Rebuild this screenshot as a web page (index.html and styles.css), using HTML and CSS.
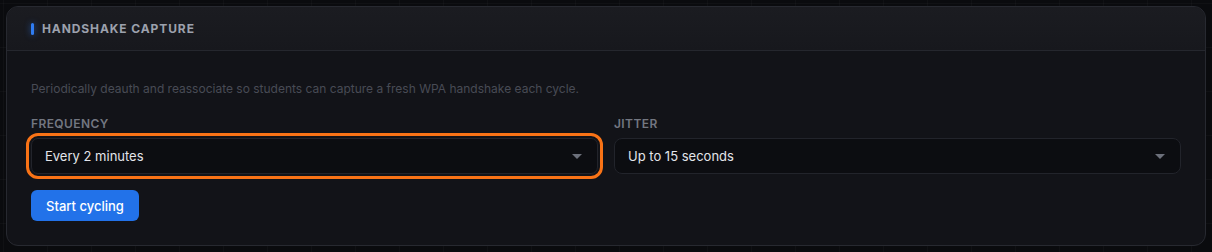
FILE: index.html
```html
<!DOCTYPE html>
<html lang="en">
<head>
<meta charset="utf-8">
<title>Handshake Capture</title>
<link rel="stylesheet" href="styles.css">
</head>
<body>
  <section class="card">
    <header class="card-head">
      <span class="accent"></span>
      <h2 class="title">Handshake Capture</h2>
    </header>
    <div class="card-body">
      <p class="desc">Periodically deauth and reassociate so students can capture a fresh WPA handshake each cycle.</p>
      <div class="fields">
        <div class="field">
          <label class="label">Frequency</label>
          <div class="select focused">
            <span class="value">Every 2 minutes</span>
            <span class="caret"></span>
          </div>
        </div>
        <div class="field">
          <label class="label">Jitter</label>
          <div class="select">
            <span class="value">Up to 15 seconds</span>
            <span class="caret"></span>
          </div>
        </div>
      </div>
      <div class="actions">
        <button class="btn">Start cycling</button>
      </div>
    </div>
  </section>
</body>
</html>
```

FILE: styles.css
```css
* { box-sizing: border-box; }
html, body { height: 100%; }
body {
  margin: 0;
  padding: 6px;
  background-color: #0a0b0e;
  background-image:
    linear-gradient(rgba(255,255,255,0.025) 1px, transparent 1px),
    linear-gradient(90deg, rgba(255,255,255,0.025) 1px, transparent 1px);
  background-size: 44px 44px;
  background-position: 3px 3px;
  font-family: Inter, "Noto Sans", "Liberation Sans", sans-serif;
}
.card {
  width: 1200px;
  border: 1px solid #272930;
  border-radius: 12px;
  background: #121318;
  overflow: hidden;
}
.card-head {
  height: 44px;
  display: flex;
  align-items: center;
  gap: 8px;
  padding: 0 24px;
  background: linear-gradient(#1b1c21, #17181d);
  border-bottom: 1px solid #25272e;
}
.accent {
  width: 3px;
  height: 12px;
  border-radius: 2px;
  background: #2f7cf2;
  box-shadow: 0 0 6px rgba(47,124,242,0.6);
}
.title {
  margin: 0;
  font-size: 12px;
  font-weight: 700;
  letter-spacing: 0.9px;
  text-transform: uppercase;
  color: #9ca1ad;
}
.card-body {
  padding: 30px 24px 24px;
}
.desc {
  margin: 0 0 20px;
  font-size: 12px;
  line-height: 16px;
  color: #484b55;
}
.fields {
  display: grid;
  grid-template-columns: 1fr 1fr;
  gap: 16px;
}
.field { display: flex; flex-direction: column; }
.label {
  font-size: 12px;
  line-height: 14px;
  font-weight: 600;
  letter-spacing: 0.4px;
  text-transform: uppercase;
  color: #737781;
  margin-bottom: 7px;
}
.select {
  height: 36px;
  display: flex;
  align-items: center;
  justify-content: space-between;
  padding: 0 15px 0 13px;
  background: #0c0d11;
  border: 1px solid #22242b;
  border-radius: 8px;
}
.select.focused {
  outline: 3px solid #f97316;
  outline-offset: 2px;
  border-radius: 7px;
}
.value {
  font-size: 13px;
  color: #e3e5ea;
}
.caret {
  width: 0;
  height: 0;
  border-left: 5px solid transparent;
  border-right: 5px solid transparent;
  border-top: 5px solid #6c707b;
}
.actions {
  display: flex;
  margin-top: 16px;
}
.btn {
  height: 31px;
  padding: 0 15px;
  border: 0;
  border-radius: 6px;
  background: #2272e9;
  color: #fff;
  font-family: inherit;
  font-size: 13px;
  font-weight: 500;
}
```
